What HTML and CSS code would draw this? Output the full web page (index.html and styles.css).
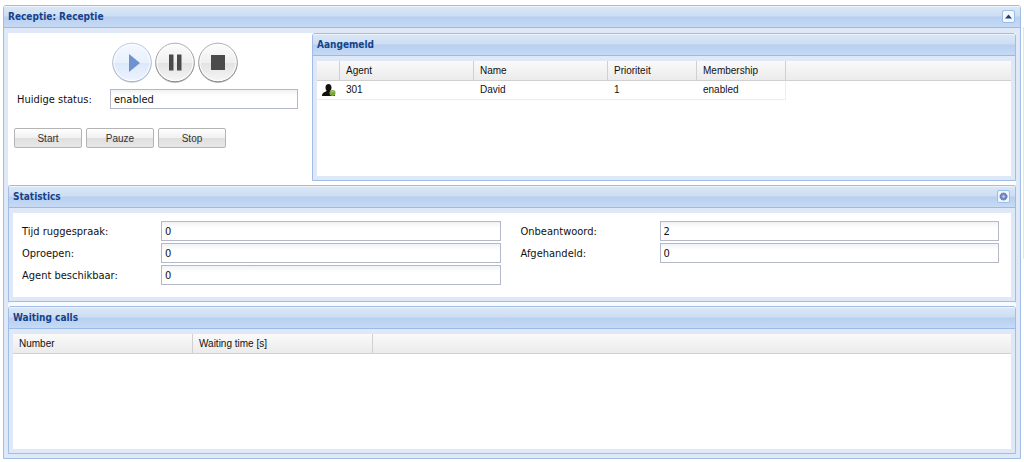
FILE: index.html
```html
<!DOCTYPE html>
<html lang="nl">
<head>
<meta charset="utf-8">
<title>Receptie</title>
<link rel="stylesheet" href="styles.css">
</head>
<body>
<main class="panel outer">
  <header class="panel-header">
    <h1 class="title">Receptie: Receptie</h1>
    <button class="tool" type="button" aria-label="Inklappen">
      <svg width="13" height="13" viewBox="0 0 13 13"><rect x=".5" y=".5" width="12" height="12" rx="1.5" fill="#f3f8fe" stroke="#9dbde6"/><path d="M3 8.500 6.500 4.500 10 8.500z" fill="#1f3f78"/></svg>
    </button>
  </header>
  <div class="outer-body">
    <div class="top">
      <section class="control">
        <div class="media">
          <button class="round" type="button" aria-label="Start">
            <svg width="40" height="42" viewBox="0 0 40 42">
              <defs>
                <linearGradient id="blue" x1="0" y1="0" x2="0" y2="1"><stop offset="0" stop-color="#f4f8ff"/><stop offset=".5" stop-color="#e9f1fd"/><stop offset=".51" stop-color="#dce8fa"/><stop offset="1" stop-color="#edf4ff"/></linearGradient>
                <linearGradient id="gray" x1="0" y1="0" x2="0" y2="1"><stop offset="0" stop-color="#fdfdfd"/><stop offset=".5" stop-color="#efefef"/><stop offset=".51" stop-color="#e3e3e3"/><stop offset="1" stop-color="#f6f6f6"/></linearGradient>
                <linearGradient id="blueRim" x1="0" y1="0" x2="0" y2="1"><stop offset="0" stop-color="#b9c9e6"/><stop offset="1" stop-color="#a3aec0"/></linearGradient>
                <linearGradient id="grayRim" x1="0" y1="0" x2="0" y2="1"><stop offset="0" stop-color="#b0b0b0"/><stop offset="1" stop-color="#808080"/></linearGradient>
              </defs>
              <circle cx="20" cy="21.5" r="19" fill="none" stroke="#dbe0e8"/>
              <circle cx="20" cy="20.5" r="19.3" fill="url(#blue)" stroke="url(#blueRim)"/>
              <circle cx="20" cy="20.5" r="18" fill="none" stroke="#fff" stroke-opacity=".8"/>
              <path d="M17 12v18l11-9z" fill="#6f92ce"/>
            </svg>
          </button>
          <button class="round" type="button" aria-label="Pauze">
            <svg width="40" height="42" viewBox="0 0 40 42">
              <circle cx="20" cy="21.5" r="19" fill="none" stroke="#c6c6c6"/>
              <circle cx="20" cy="20.5" r="19.3" fill="url(#gray)" stroke="url(#grayRim)"/>
              <circle cx="20" cy="20.5" r="18" fill="none" stroke="#fff" stroke-opacity=".8"/>
              <path d="M14 12.500h4.500v16H14zM22 12.500h4.500v16H22z" fill="#4b4b4b"/>
            </svg>
          </button>
          <button class="round" type="button" aria-label="Stop">
            <svg width="40" height="42" viewBox="0 0 40 42">
              <circle cx="20" cy="21.5" r="19" fill="none" stroke="#c6c6c6"/>
              <circle cx="20" cy="20.5" r="19.3" fill="url(#gray)" stroke="url(#grayRim)"/>
              <circle cx="20" cy="20.5" r="18" fill="none" stroke="#fff" stroke-opacity=".8"/>
              <path d="M13 13h14v15H13z" fill="#4b4b4b"/>
            </svg>
          </button>
        </div>
        <div class="field status">
          <label for="status">Huidige status:</label>
          <input id="status" type="text" value="enabled" readonly>
        </div>
        <div class="actions">
          <button class="btn" type="button">Start</button>
          <button class="btn" type="button">Pauze</button>
          <button class="btn" type="button">Stop</button>
        </div>
      </section>
      <section class="panel agents">
        <header class="panel-header"><h2 class="title">Aangemeld</h2></header>
        <div class="panel-body">
          <table class="grid">
            <thead>
              <tr><th class="c-icon"></th><th class="c-agent">Agent</th><th class="c-agent">Name</th><th class="c-small">Prioriteit</th><th class="c-small">Membership</th><th></th></tr>
            </thead>
            <tbody>
              <tr>
                <td class="icon-cell"><svg width="14" height="13" viewBox="0 0 14 13"><path d="M3.500 3.500C3.500 1.200 4.700 0 6.500 0s3 1.200 3 3.500C9.500 5 9 6 8.300 6.800c.2.900 4.700 1.200 4.700 5.200H0c0-4 4.500-4.300 4.700-5.200C4 6 3.500 5 3.500 3.500z" fill="#111"/><circle cx="10.500" cy="9" r="3" fill="#7ea63a"/><path d="M9 8.500 10.500 7l1.300 1" fill="none" stroke="#b9d66f"/></svg></td>
                <td>301</td><td>David</td><td>1</td><td class="last">enabled</td><td class="rest"></td>
              </tr>
            </tbody>
          </table>
        </div>
      </section>
    </div>
    <section class="panel stats">
      <header class="panel-header">
        <h2 class="title">Statistics</h2>
        <button class="tool" type="button" aria-label="Instellingen">
          <svg width="13" height="13" viewBox="0 0 13 13"><rect x=".5" y=".5" width="12" height="12" rx="1.5" fill="#eef5fe" stroke="#9dbde6"/><circle cx="6.500" cy="6.500" r="3.500" fill="#8796c8" stroke="#566aa5" stroke-dasharray="1.500 .7"/><circle cx="6.500" cy="6.500" r="2.700" fill="#8f9fd0" stroke="#5b6dab" stroke-width=".8"/><circle cx="6.500" cy="6.500" r="1" fill="#c5d0ec"/></svg>
        </button>
      </header>
      <div class="panel-body form">
        <div class="column">
          <div class="field"><label for="talk">Tijd ruggespraak:</label><input id="talk" type="text" value="0" readonly></div>
          <div class="field"><label for="calls">Oproepen:</label><input id="calls" type="text" value="0" readonly></div>
          <div class="field"><label for="free">Agent beschikbaar:</label><input id="free" type="text" value="0" readonly></div>
        </div>
        <div class="column">
          <div class="field"><label for="missed">Onbeantwoord:</label><input id="missed" type="text" value="2" readonly></div>
          <div class="field"><label for="done">Afgehandeld:</label><input id="done" type="text" value="0" readonly></div>
        </div>
      </div>
    </section>
    <section class="panel waiting">
      <header class="panel-header"><h2 class="title">Waiting calls</h2></header>
      <div class="panel-body">
        <table class="grid">
          <thead><tr><th class="c-wait">Number</th><th class="c-wait">Waiting time [s]</th><th></th></tr></thead>
        </table>
      </div>
    </section>
  </div>
</main>
</body>
</html>
```
FILE: styles.css
```css
* { box-sizing: border-box; }

body {
  margin: 0;
  padding: 5px 3px 0;
  background: #fff linear-gradient(#e6e6e6, #e6e6e6) no-repeat right 27px / 1px 232px;
  color: #111;
  font-family: "DejaVu Sans Condensed", "DejaVu Sans", sans-serif;
  font-size: 11px;
}

button { font: inherit; cursor: pointer; }

.panel {
  border: 1px solid #a0bde5;
  border-radius: 3px 3px 0 0;
  background: #dfe8f6;
}

.panel-header {
  display: flex;
  align-items: center;
  justify-content: space-between;
  height: 22px;
  padding: 0 5px 0 4px;
  border-bottom: 1px solid #99bbe8;
  border-radius: 2px 2px 0 0;
  box-shadow: inset 0 1px #eef4fc;
  background: linear-gradient(#dbe7f6 0, #cddef3 48%, #b7cff0 52%, #c6daf5 100%);
}

.title {
  margin: 0;
  color: #15428b;
  font-size: 10px;
  font-weight: bold;
  line-height: 14px;
}

.tool {
  display: flex;
  padding: 0;
  border: 0;
  background: none;
}

.outer-body { padding: 5px 4px 4px; }

.panel-body {
  margin: 5px 4px 4px;
  background: #fff;
}

.top {
  display: grid;
  grid-template-columns: 304fr 704fr;
  padding-bottom: 4px;
  background: #fff;
}

.control { padding: 9px 14px 0 6px; }

.media {
  display: flex;
  gap: 3px;
  padding-left: 98px;
}

.round {
  display: flex;
  padding: 0;
  border: 0;
  background: none;
}

.field {
  display: flex;
  align-items: center;
  height: 20px;
}

.field label { flex: 0 0 139px; }

.field input {
  flex: 1;
  min-width: 0;
  height: 20px;
  padding: 0 3px;
  border: 1px solid #b5b8c8;
  background: linear-gradient(#f0f2f4, #fff 6px);
  color: #111;
  font: inherit;
}

.status {
  margin-top: 5px;
  padding-left: 3px;
}

.status label { flex-basis: 93px; }

.actions {
  display: flex;
  gap: 4px;
  margin-top: 19px;
}

.btn {
  width: 68px;
  height: 20px;
  padding: 0;
  border: 1px solid #b4b4b4;
  border-radius: 2px;
  background: linear-gradient(#fff, #f1f1f1 48%, #dfdfdf 52%, #e8e8e8);
  color: #333;
  font: 10px "Liberation Sans", Arial, sans-serif;
}

.agents .panel-body { min-height: 115px; }

.grid {
  width: 100%;
  border-collapse: separate;
  border-spacing: 0;
  table-layout: fixed;
  font: 10px/12px "Liberation Sans", Arial, sans-serif;
}

.grid th {
  height: 20px;
  padding: 0 6px;
  border-right: 1px solid #d0d0d0;
  border-bottom: 1px solid #d0d0d0;
  background: linear-gradient(#fafafa, #ebebeb);
  font-weight: normal;
  text-align: left;
}

.grid th:last-child { border-right: 0; }

.grid td {
  height: 19px;
  padding: 0 6px;
  border-bottom: 1px solid #ededed;
}

.grid td.last { border-right: 1px solid #ededed; }
.grid td.rest { border-bottom: 0; }
.grid td.icon-cell { padding: 0 5px; }
.icon-cell svg { display: block; }

.c-icon { width: 23px; }
.c-agent { width: 134px; }
.c-small { width: 89px; }
.c-wait { width: 180px; }

.form {
  display: flex;
  gap: 20px;
  min-height: 84px;
  padding: 8px 12px 0 9px;
}

.column {
  display: flex;
  flex: 1;
  flex-direction: column;
  gap: 2px;
}

.waiting {
  margin-top: 4px;
  box-shadow: 0 -4px #f8fbff;
}

.waiting .panel-body { min-height: 115px; }
```
